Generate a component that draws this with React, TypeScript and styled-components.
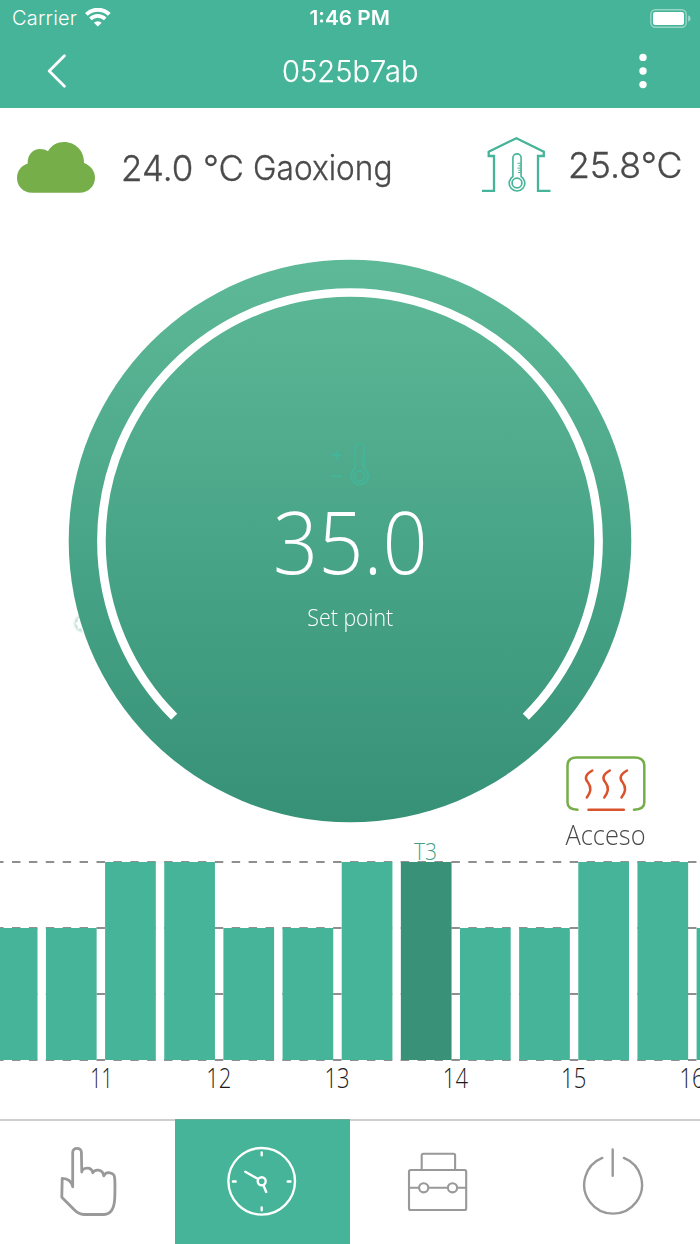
import React from "react";
import styled, { createGlobalStyle } from "styled-components";

const GREEN = "#45b498";
const GREY = "#999999";
const UI = `Inter, "Liberation Sans", sans-serif`;
const LIGHT = `"Open Sans", "Noto Sans", sans-serif`;

const GlobalStyle = createGlobalStyle`
  * { box-sizing: border-box; }
  html, body { margin: 0; padding: 0; background: #fff; }
  svg { display: block; flex: none; }
`;

const Screen = styled.div`
  width: 700px;
  height: 1244px;
  overflow: hidden;
  display: flex;
  flex-direction: column;
  background: #fff;
  font-family: ${UI};
`;

/* A line of text whose glyphs are condensed or widened horizontally. */
const Text = styled.span<{
  $size: number;
  $stretch?: number;
  $weight?: number;
  $color?: string;
  $family?: string;
  $origin?: string;
  $spacing?: number;
  $leading?: number;
  $thicken?: number;
}>`
  display: block;
  white-space: pre;
  font-family: ${(p) => p.$family ?? UI};
  font-size: ${(p) => p.$size}px;
  font-weight: ${(p) => p.$weight ?? 400};
  line-height: ${(p) => p.$leading ?? 1.2};
  letter-spacing: ${(p) => p.$spacing ?? 0}px;
  color: ${(p) => p.$color ?? "#fff"};
  -webkit-text-stroke: ${(p) => p.$thicken ?? 0}px currentColor;
  transform: scaleX(${(p) => p.$stretch ?? 1});
  transform-origin: ${(p) => p.$origin ?? "left"} center;
`;

const Header = styled.header`
  height: 108px;
  flex: none;
  background: ${GREEN};
`;

const StatusBar = styled.div`
  height: 36px;
  padding: 0 9px;
  display: grid;
  grid-template-columns: 1fr auto 1fr;
  align-items: center;
`;

const Carrier = styled.div`
  display: flex;
  align-items: center;
  gap: 8px;
  padding-left: 3px;
`;

const BatterySlot = styled.div`
  display: flex;
  justify-content: flex-end;
`;

const TitleBar = styled.div`
  height: 70px;
  padding: 0 46px 0 47px;
  display: grid;
  grid-template-columns: 1fr auto 1fr;
  align-items: center;
`;

const MenuSlot = styled.div`
  display: flex;
  justify-content: flex-end;
  padding-right: 6px;
`;

const Weather = styled.section`
  height: 112px;
  flex: none;
  padding: 0 0 0 17px;
  display: flex;
  align-items: flex-start;
`;

const CloudSlot = styled.div`
  width: 104px;
  padding-top: 33px;
`;

const Outdoor = styled.div`
  width: 361px;
  padding-top: 39px;
  display: flex;
`;

const Temperature = styled.div`
  width: 132px;
`;

const HouseSlot = styled.div`
  width: 86px;
  padding-top: 28px;
`;

const Indoor = styled.div`
  padding-top: 36px;
`;

const DialArea = styled.section`
  height: 620px;
  flex: none;
  display: grid;
  grid-template: 620px / 700px;
  > * { grid-area: 1 / 1; }
`;

const DialReadout = styled.div`
  display: flex;
  flex-direction: column;
  align-items: center;
  padding-top: 223px;
  gap: 11px;
`;

const SetPointLabel = styled.div`
  padding-top: 4px;
`;

const HeatingStatus = styled.div`
  align-self: end;
  justify-self: end;
  margin-right: 47px;
  width: 94px;
  height: 104px;
  display: flex;
  flex-direction: column;
  align-items: center;
  padding-top: 20px;
  gap: 7px;
`;

const Schedule = styled.section`
  height: 279px;
  flex: none;
`;

const Nav = styled.nav`
  height: 125px;
  flex: none;
  display: grid;
  grid-template-columns: 175.4px 174.6px 175px 175px;
`;

const NavItem = styled.button<{ $active?: boolean }>`
  border: 0;
  border-top: ${(p) => (p.$active ? "1px solid #6aab99" : "2px solid #cfcfcf")};
  margin: 0;
  padding: ${(p) => (p.$active ? "25px 0 0 51px" : "24px 0 0 0")};
  background: ${(p) => (p.$active ? GREEN : "#fff")};
  display: flex;
  align-items: flex-start;
`;

const Wifi = () => (
  <svg width="26" height="20" viewBox="0 0 26 20" fill="none" stroke="#fff">
    <path d="M1.3 6.4 A16.5 16.5 0 0 1 24.3 6.4" strokeWidth="4" />
    <path d="M5.4 10.9 A10.6 10.6 0 0 1 20.2 10.9" strokeWidth="3.6" />
    <path d="M12.8 18.6 L8.9 14.8 A5.6 5.6 0 0 1 16.7 14.8 Z" fill="#fff" stroke="none" />
  </svg>
);

const Battery = () => (
  <svg width="41" height="19" viewBox="0 0 41 19">
    <rect x="0.8" y="0.8" width="35.4" height="17.4" rx="4.5" fill="none" stroke="#fff" strokeOpacity="0.45" strokeWidth="1.4" />
    <rect x="3" y="3" width="31" height="13" rx="2.2" fill="#fff" />
    <path d="M38.2 6.3 Q40.6 7.3 40.6 9.5 Q40.6 11.7 38.2 12.7 Z" fill="#fff" fillOpacity="0.5" />
  </svg>
);

const Back = () => (
  <svg width="20" height="34" viewBox="0 0 20 34" fill="none" stroke="#fff" strokeWidth="2.8" strokeLinecap="round" strokeLinejoin="round">
    <path d="M17.4 1.8 L2.2 17 L17.4 32.2" />
  </svg>
);

const Dots = () => (
  <svg width="10" height="36" viewBox="0 0 10 36" fill="#fff">
    <circle cx="5" cy="4.4" r="3.7" />
    <circle cx="5" cy="18" r="3.7" />
    <circle cx="5" cy="31.6" r="3.7" />
  </svg>
);

const Cloud = () => (
  <svg width="78" height="52" viewBox="0 0 78 52">
    <path
      fill="#76ae4a"
      d="M15 51.7 C6 51.7 0 45 0 37 C0 30 4.3 24.5 10.7 22.5 C10.3 13.5 16 8 23 8 C26 8 28.8 8.8 31 10.3 C34.5 4 40.5 1 47 1 C58.5 1 67.5 10 67 22 C73.6 24.5 78 30 78 36.7 C78 45 71.5 51.7 62.5 51.7 Z"
    />
  </svg>
);

const House = () => (
  <svg width="70" height="57" viewBox="0 0 70 57" fill="none" stroke={GREEN} strokeWidth="2.3">
    <path d="M0 54.8 H12 V20 H6.7 V15.7 L34.4 2.2 L61.8 15.7 V20 H56 V54.8 H68.5" />
    <path strokeWidth="1.6" d="M30.9 40.5 V22 A4.1 4.1 0 0 1 39.1 22 V40.5 A7.8 7.8 0 1 1 30.9 40.5 Z" />
    <circle cx="35" cy="47" r="4.9" strokeWidth="1.7" />
    <path strokeWidth="1" d="M35.5 27.3 H39 M36.5 29.7 H39 M35.5 32.1 H39 M36.5 34.3 H39 M36 36.5 H39" />
  </svg>
);

const Dial = () => (
  <svg width="700" height="620" viewBox="0 220 700 620">
    <defs>
      <linearGradient id="dial" x1="0" y1="0" x2="0" y2="1">
        <stop offset="0" stopColor="#5eb998" />
        <stop offset="0.5" stopColor="#49a587" />
        <stop offset="1" stopColor="#369177" />
      </linearGradient>
      <filter id="glow" x="-50%" y="-50%" width="200%" height="200%">
        <feGaussianBlur stdDeviation="1.3" />
      </filter>
    </defs>
    <circle cx="83" cy="623.5" r="8.5" fill="#8cc9b8" fillOpacity="0.6" filter="url(#glow)" />
    <path d="M84 614 L81 618.5 L78 618 L77.5 621.5 L75.5 623.5 L77.5 626 L78 629 L81 628.5 L83.5 634 L92 634 V614 Z" fill="#fff" />
    <circle cx="350" cy="541" r="281.3" fill="url(#dial)" />
    <path d="M174.2 716.8 A248.6 248.6 0 1 1 525.8 716.8" fill="none" stroke="#fff" strokeWidth="8.6" />
  </svg>
);

const Thermometer = () => (
  <svg width="38" height="43" viewBox="0 0 38 43" fill="none" stroke={GREEN} strokeWidth="1.8">
    <path d="M0.5 12 H10.5 M5.5 7 V17 M0.5 33.3 H10.5" strokeWidth="2" />
    <path d="M24 25.8 V5 A4.6 4.6 0 0 1 33.2 5 V25.8 A8.6 8.6 0 1 1 24 25.8 Z" />
    <circle cx="28.6" cy="33.3" r="5.3" />
    <path d="M30 11.5 H33 M30 14 H33 M30 16.5 H33 M30 19 H33 M30 21.5 H33" strokeWidth="1.4" />
  </svg>
);

const Heating = () => (
  <svg width="80" height="56" viewBox="0 0 80 56" fill="none" strokeWidth="2.5" strokeLinecap="round">
    <g stroke="#76ae4a">
      <path d="M11.5 53.8 C4 53.5 1.5 51 1.5 46.5 V10 C1.5 4 4.5 1.5 10.5 1.5 H68.5 C75 1.5 78.3 4 78.3 10 V46.5 C78.3 51 75.5 53.5 68 53.8" />
    </g>
    <g stroke="#d9532c">
      <path d="M22.5 53.8 H57.8" />
      <path d="M26.3 14.5 C20 18 18 22 22 26.5 C25.5 31 25 36 20.8 41.5" />
      <path d="M43.8 14.5 C37.5 18 35.5 22 39.5 26.5 C43 31 42.5 36 38.3 41.5" />
      <path d="M61 14.5 C54.7 18 52.7 22 56.7 26.5 C60.2 31 59.7 36 55.5 41.5" />
    </g>
  </svg>
);

const UNIT = 8.45;
const BARS = [1, 1, 2, 2, 1, 1, 2, 3, 1, 1, 2, 2, 1];
const HOURS = [11, 12, 13, 14, 15, 16];

const Chart = () => (
  <svg width="700" height="279" viewBox="0 840 700 279">
    {[862, 928, 994, 1060].map((y) => (
      <line key={y} x1="-4.9" x2="700" y1={y} y2={y} stroke="#8f8f8f" strokeWidth="2" strokeDasharray={`${UNIT} ${UNIT}`} />
    ))}
    {BARS.map((level, i) => {
      const top = level === 1 ? 928 : 862;
      return (
        <rect
          key={i}
          x={105.1 + (i - 2) * UNIT * 7}
          y={top}
          width={UNIT * 6}
          height={1060 - top}
          fill={level === 3 ? "#399178" : GREEN}
        />
      );
    })}
    <text x="414" y="860.3" fontFamily={LIGHT} fontWeight="300" fontSize="23" fill="#429f85" textLength="23" lengthAdjust="spacingAndGlyphs">T3</text>
    {HOURS.map((hour, i) => (
      <text
        key={hour}
        x={(hour === 11 ? 90.2 : 87.9) + i * 118.3}
        y="1088"
        fontFamily={LIGHT}
        fontWeight="300"
        fontSize="27"
        fill="#1c1c1c"
        textLength={hour === 11 ? 22.5 : 25.2}
        lengthAdjust="spacingAndGlyphs"
      >
        {hour}
      </text>
    ))}
  </svg>
);

const Hand = () => (
  <svg width="120" height="80" viewBox="0 1145 120 80" fill="none" stroke={GREY} strokeWidth="2.8" strokeLinejoin="round" strokeLinecap="round">
    <path d="M72.7 1186.8 V1152.5 C72.7 1147 81.3 1147 81.4 1152.5 L81.8 1172 C82 1167.5 91.5 1165.8 92.8 1172.8 C94.5 1169 102.5 1168.5 103.8 1175.8 C106 1171 114.2 1172 114.6 1177.5 C115.2 1182 115 1190 114.8 1197 C114.5 1210 110 1214.3 104 1214.5 H84 C80 1214.3 77 1212.5 74.5 1210 L61.8 1197.3 L62.2 1178.4 C68 1178.5 71.5 1181 72.7 1186.8 Z" />
  </svg>
);

const Clock = () => (
  <svg width="71" height="71" viewBox="0 0 71 71" fill="none" stroke="#fff" strokeWidth="2.4" strokeLinecap="round">
    <circle cx="35.7" cy="36.3" r="33.3" />
    <circle cx="35.7" cy="36.3" r="4" />
    <path d="M35.7 7.5 V10.3 M35.7 62.5 V65.3 M6.9 36.5 H9.7 M61.7 36.5 H64.5 M32 34 L19.3 26.7 M37.4 40.3 L40.2 47" />
  </svg>
);

const Toolbox = () => (
  <svg width="120" height="80" viewBox="350 1145 120 80" fill="none" stroke={GREY} strokeWidth="2.1">
    <path d="M421.7 1169.5 V1155.5 Q421.7 1153.8 423.4 1153.8 H453.4 Q455.1 1153.8 455.1 1155.5 V1169.5" />
    <rect x="409" y="1170" width="57.2" height="40" rx="1.8" />
    <path d="M409 1187.8 H419 M428 1187.8 H448 M457 1187.8 H466" />
    <circle cx="423.7" cy="1187.8" r="4.6" />
    <circle cx="452.5" cy="1187.8" r="4.6" />
  </svg>
);

const Power = () => (
  <svg width="120" height="80" viewBox="525 1145 120 80" fill="none" stroke={GREY} strokeWidth="2.4" strokeLinecap="round">
    <path d="M612.7 1149.4 V1175.7 M602.3 1157.9 A28.9 28.9 0 1 0 623.9 1157.9" />
  </svg>
);

export default function App() {
  return (
    <Screen>
      <GlobalStyle />
      <Header>
        <StatusBar>
          <Carrier>
            <Text $size={20} $weight={350} $spacing={0.2}>Carrier</Text>
            <Wifi />
          </Carrier>
          <Text $size={20} $weight={600} $stretch={1.04} $origin="center">1:46 PM</Text>
          <BatterySlot><Battery /></BatterySlot>
        </StatusBar>
        <TitleBar>
          <Back />
          <Text $size={30} $weight={350} $stretch={0.97} $origin="center" $thicken={0.25}>0525b7ab</Text>
          <MenuSlot><Dots /></MenuSlot>
        </TitleBar>
      </Header>
      <Weather>
        <CloudSlot><Cloud /></CloudSlot>
        <Outdoor>
          <Temperature>
            <Text $size={36} $weight={350} $color="#4a4a4a" $stretch={0.97} $thicken={0.35}>24.0 °C</Text>
          </Temperature>
          <Text $size={34} $weight={350} $color="#4a4a4a" $stretch={0.93} $leading={1.26} $thicken={0.35}>Gaoxiong</Text>
        </Outdoor>
        <HouseSlot><House /></HouseSlot>
        <Indoor>
          <Text $size={36} $weight={350} $color="#4a4a4a" $stretch={0.99} $thicken={0.35}>25.8°C</Text>
        </Indoor>
      </Weather>
      <DialArea>
        <Dial />
        <DialReadout>
          <Thermometer />
          <Text $size={87.5} $weight={300} $family={LIGHT} $stretch={0.905} $origin="center" $leading={1}>35.0</Text>
          <SetPointLabel>
            <Text $size={24} $weight={300} $family={LIGHT} $stretch={0.89} $origin="center" $leading={1.4}>Set point</Text>
          </SetPointLabel>
        </DialReadout>
        <HeatingStatus>
          <Heating />
          <Text $size={27} $weight={300} $family={LIGHT} $color="#4a4a4a" $stretch={0.94} $origin="center" $leading={1.15}>Acceso</Text>
        </HeatingStatus>
      </DialArea>
      <Schedule><Chart /></Schedule>
      <Nav>
        <NavItem><Hand /></NavItem>
        <NavItem $active><Clock /></NavItem>
        <NavItem><Toolbox /></NavItem>
        <NavItem><Power /></NavItem>
      </Nav>
    </Screen>
  );
}
